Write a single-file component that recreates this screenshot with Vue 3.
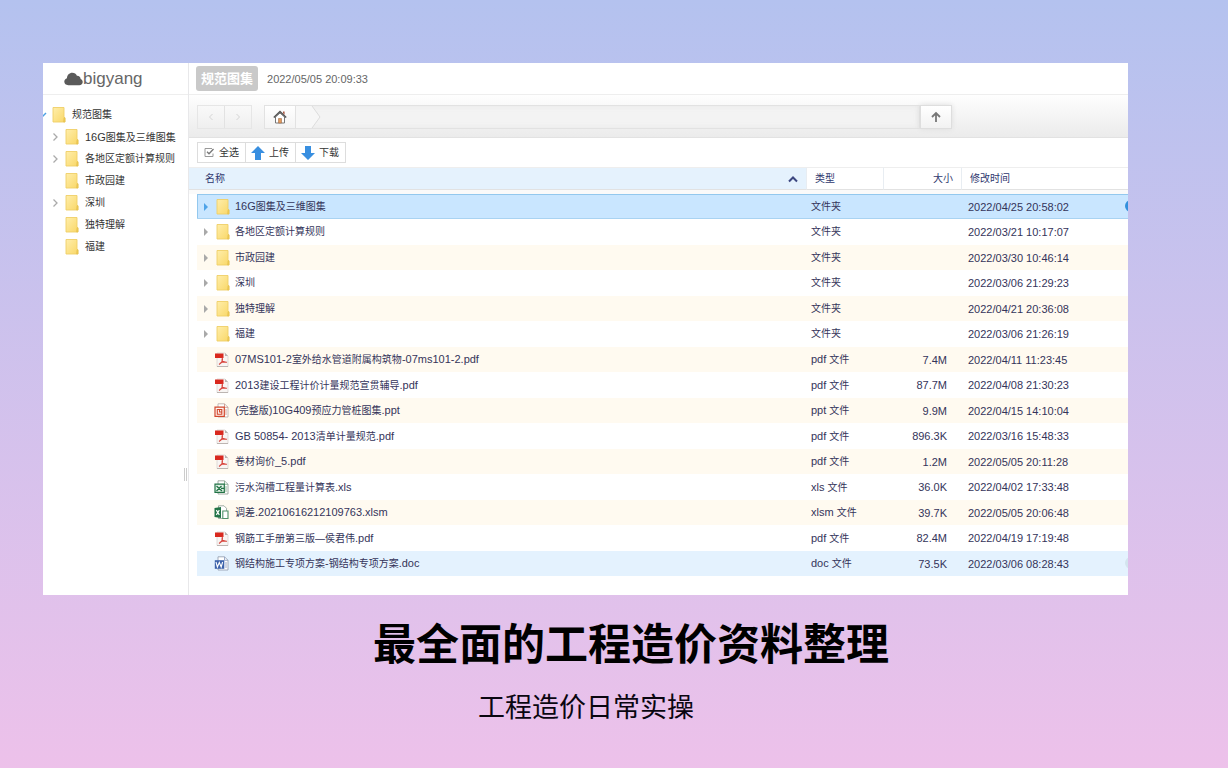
<script setup>
import { ref } from 'vue'

const tree = [
  { name: '16G图集及三维图集', expandable: true },
  { name: '各地区定额计算规则', expandable: true },
  { name: '市政园建', expandable: false },
  { name: '深圳', expandable: true },
  { name: '独特理解', expandable: false },
  { name: '福建', expandable: false },
]

const rows = [
  { name: '16G图集及三维图集', kind: 'folder', type: '文件夹', size: '', time: '2022/04/25 20:58:02' },
  { name: '各地区定额计算规则', kind: 'folder', type: '文件夹', size: '', time: '2022/03/21 10:17:07' },
  { name: '市政园建', kind: 'folder', type: '文件夹', size: '', time: '2022/03/30 10:46:14' },
  { name: '深圳', kind: 'folder', type: '文件夹', size: '', time: '2022/03/06 21:29:23' },
  { name: '独特理解', kind: 'folder', type: '文件夹', size: '', time: '2022/04/21 20:36:08' },
  { name: '福建', kind: 'folder', type: '文件夹', size: '', time: '2022/03/06 21:26:19' },
  { name: '07MS101-2室外给水管道附属构筑物-07ms101-2.pdf', kind: 'pdf', type: 'pdf 文件', size: '7.4M', time: '2022/04/11 11:23:45' },
  { name: '2013建设工程计价计量规范宣贯辅导.pdf', kind: 'pdf', type: 'pdf 文件', size: '87.7M', time: '2022/04/08 21:30:23' },
  { name: '(完整版)10G409预应力管桩图集.ppt', kind: 'ppt', type: 'ppt 文件', size: '9.9M', time: '2022/04/15 14:10:04' },
  { name: 'GB 50854- 2013清单计量规范.pdf', kind: 'pdf', type: 'pdf 文件', size: '896.3K', time: '2022/03/16 15:48:33' },
  { name: '卷材询价_5.pdf', kind: 'pdf', type: 'pdf 文件', size: '1.2M', time: '2022/05/05 20:11:28' },
  { name: '污水沟槽工程量计算表.xls', kind: 'xls', type: 'xls 文件', size: '36.0K', time: '2022/04/02 17:33:48' },
  { name: '调差.20210616212109763.xlsm', kind: 'xlsm', type: 'xlsm 文件', size: '39.7K', time: '2022/05/05 20:06:48' },
  { name: '钢筋工手册第三版—侯君伟.pdf', kind: 'pdf', type: 'pdf 文件', size: '82.4M', time: '2022/04/19 17:19:48' },
  { name: '钢结构施工专项方案-钢结构专项方案.doc', kind: 'doc', type: 'doc 文件', size: '73.5K', time: '2022/03/06 08:28:43' },
]

const selected = ref(0)
const hovered = ref(14)

// Latin runs are set one size larger than the Chinese ones.
const split = (text) =>
  text.match(/[\x20-\x7e]+|[^\x20-\x7e]+/g).map((run) => ({ run, latin: /^[\x20-\x7e]/.test(run) }))
</script>

<template>
  <main class="page">
    <svg class="defs" width="0" height="0" aria-hidden="true">
      <defs>
        <linearGradient id="folderFill" x1="0" y1="0" x2="1" y2="1">
          <stop offset="0" stop-color="#ffeeab" />
          <stop offset="1" stop-color="#f9d767" />
        </linearGradient>
        <symbol id="folder" viewBox="0 0 14 16">
          <path d="M1 .5h11v9l1 1.500v4H1z" fill="url(#folderFill)" stroke="#efcf68" stroke-width=".9" />
          <path d="M11.500 15l.5-4.500 1 .5v4z" fill="#f0ca50" stroke="#e3bf50" stroke-width=".5" />
        </symbol>
        <symbol id="pdf" viewBox="0 0 15 15">
          <path d="M3 1h8l3 3v10.500H3z" fill="#f8f5f3" stroke="#d4cecb" stroke-width=".7" />
          <path d="M11 1v3h3z" fill="#b9b2b0" />
          <path d="M1 1.500h8.500V6H1z" fill="#d9281e" />
          <path d="M8 5.500c1.200 2.300-.3 5.200-3 7M7.500 7.500c1 2 3.300 2.900 5.500 2.700M6 11c2-.9 4.500-1.300 7-.7" fill="none" stroke="#d8443d" stroke-width="1.100" />
          <path d="M3 14.500h11" stroke="#bcb5b2" />
        </symbol>
        <symbol id="ppt" viewBox="0 0 15 15">
          <path d="M4 .8h6.500l3.500 3.500v9.700H4z" fill="#fff" stroke="#b5aaa6" stroke-width=".8" />
          <path d="M10.500.8v3.500H14M11 7h2M11 9h2M11 11h2" fill="none" stroke="#cf8d7f" stroke-width=".8" />
          <path d="M1 4.200h9.300v9.100H1z" fill="#fff5f1" stroke="#d2472d" stroke-width="1.200" />
          <path d="M3.300 6.500h4.500v4.800H3.300zM5.500 6.500v2.500h2.300" fill="none" stroke="#d2472d" stroke-width="1.100" />
        </symbol>
        <symbol id="xls" viewBox="0 0 15 15">
          <path d="M4 .8h6.500l3.500 3.500v9.700H4z" fill="#fff" stroke="#8c9b91" stroke-width=".8" />
          <path d="M10.500.8v3.500H14M11 7h2M11 9h2M11 11h2" fill="none" stroke="#78a887" stroke-width=".8" />
          <path d="M1 4.200h9.300v8.100H1z" fill="#e5f3e9" stroke="#217346" stroke-width="1.200" />
          <path d="M2.500 6l5.500 5M7.500 6l-5 5M7 8.300h3" stroke="#217346" stroke-width="1.300" />
        </symbol>
        <symbol id="xlsm" viewBox="0 0 15 15">
          <path d="M4.500.8H10l2.500 2.500v10.200h-8z" fill="#fff" stroke="#8c9b91" stroke-width=".8" />
          <path d="M.5 3l6.500-1v11l-6.500-1z" fill="#217346" />
          <path d="M2.300 5.200l3 4.600M5.300 5.200l-3 4.600" stroke="#fff" stroke-width="1.200" />
          <path d="M8.800 6h5.200v7.500H8.800z" fill="#fff" stroke="#4f9269" stroke-width="1.100" />
        </symbol>
        <symbol id="doc" viewBox="0 0 15 15">
          <path d="M4 .8h6.500l3.500 3.500v9.700H4z" fill="#fff" stroke="#8e98aa" stroke-width=".8" />
          <path d="M10.500.8v3.500H14M11 7h2M11 9h2M11 11h2" fill="none" stroke="#8498bd" stroke-width=".8" />
          <path d="M.8 4.200h9.500v8.600H.8z" fill="#3c62aa" />
          <path d="M2 6l1.400 5 1.900-4.500 1.900 4.500L8.600 6" fill="none" stroke="#fff" stroke-width="1.100" />
        </symbol>
      </defs>
    </svg>

    <section class="panel">
      <aside class="side">
        <div class="brand">
          <svg class="cloud" viewBox="0 0 20 14" aria-hidden="true">
            <path d="M4.500 13.500C2 13.500.3 12 .3 9.700c0-1.900 1.300-3.200 2.800-3.600C3.300 2.900 5.600.5 8.700.5c2.400 0 4.100 1.200 4.900 3.100 2.400-.1 3.900 1.400 3.900 3.500 1.400.6 2.200 1.700 2.200 3.100 0 2-1.500 3.300-3.600 3.300z" fill="#5a5a5a" />
          </svg>
          <span>bigyang</span>
        </div>
        <nav class="tree" aria-label="目录">
          <button class="node root" type="button">
            <svg class="twist" viewBox="0 0 8 10" aria-hidden="true"><path d="M-1 7l4-4" stroke="#4ba0e4" stroke-width="1.500" /></svg>
            <svg class="folder" aria-hidden="true"><use href="#folder" /></svg>
            <span>规范图集</span>
          </button>
          <button v-for="n in tree" :key="n.name" class="node" type="button">
            <svg class="twist" viewBox="0 0 8 10" aria-hidden="true">
              <path v-if="n.expandable" d="M2.500 1.500L6 5 2.500 8.500" fill="none" stroke="#aaa" stroke-width="1.300" />
            </svg>
            <svg class="folder" aria-hidden="true"><use href="#folder" /></svg>
            <span><span v-for="(s, i) in split(n.name)" :key="i" :class="{ latin: s.latin }">{{ s.run }}</span></span>
          </button>
        </nav>
        <span class="grip"></span>
      </aside>

      <div class="content">
        <header class="titlebar">
          <span class="tag">规范图集</span>
          <time class="clock">2022/05/05 20:09:33</time>
        </header>

        <div class="navbar">
          <div class="history">
            <button type="button" aria-label="后退"><svg viewBox="0 0 10 10"><path d="M6.500 2L3.500 5l3 3" /></svg></button>
            <button type="button" aria-label="前进"><svg viewBox="0 0 10 10"><path d="M3.500 2l3 3-3 3" /></svg></button>
          </div>
          <div class="path">
            <button class="home" type="button" aria-label="主页">
              <svg viewBox="0 0 14 14">
                <path d="M2.500 7v6h9V7L7 3z" fill="#fff" stroke="#777" />
                <path d="M.8 7.500L7 1.500l6.200 6" fill="none" stroke="#555" stroke-width="1.500" />
                <path d="M10 1.500h1.600v3.300L10 3.300z" fill="#aa5b46" />
                <path d="M5.500 8.500h3V13h-3z" fill="#e39a5c" stroke="#a16b48" stroke-width=".6" />
              </svg>
            </button>
            <svg class="crumb" viewBox="0 0 26 22" aria-hidden="true"><path d="M0 0h16l8 11-8 11H0z" fill="#f7f7f7" /><path d="M16 0l8 11-8 11" fill="none" stroke="#dcdcdc" /></svg>
          </div>
          <button class="up" type="button" aria-label="上一级">
            <svg viewBox="0 0 12 12"><path d="M6 11V2M2 6l4-4 4 4" fill="none" stroke="#777" stroke-width="1.800" /></svg>
          </button>
        </div>

        <div class="tools">
          <button type="button">
            <svg class="check" viewBox="0 0 12 12" aria-hidden="true"><path d="M9 1.500H2v8h8V6.500" fill="none" stroke="#999" /><path d="M4 4.800l2 2L10.500 2" fill="none" stroke="#777" stroke-width="1.300" /></svg>
            <span>全选</span>
          </button>
          <button type="button">
            <svg class="arrow" viewBox="0 0 14 14" aria-hidden="true"><path d="M7 0l7 7h-4v7H4V7H0z" fill="#398fe0" /></svg>
            <span>上传</span>
          </button>
          <button type="button">
            <svg class="arrow" viewBox="0 0 14 14" aria-hidden="true"><path d="M7 14l7-7h-4V0H4v7H0z" fill="#398fe0" /></svg>
            <span>下载</span>
          </button>
        </div>

        <table class="files">
          <colgroup>
            <col />
            <col class="c-type" />
            <col class="c-size" />
            <col class="c-time" />
          </colgroup>
          <thead>
            <tr>
              <th class="sorted" scope="col">
                <div class="sorthead">
                  <span>名称</span>
                  <svg viewBox="0 0 10 8" aria-hidden="true"><path d="M1 6.500l4-4 4 4" fill="none" stroke="#3c4780" stroke-width="2" /></svg>
                </div>
              </th>
              <th scope="col">类型</th>
              <th class="num" scope="col">大小</th>
              <th scope="col">修改时间</th>
            </tr>
          </thead>
          <tbody>
            <tr class="gap" aria-hidden="true"><td colspan="4"></td></tr>
            <tr
              v-for="(r, i) in rows"
              :key="r.name"
              :class="{ odd: i % 2 === 0, selected: i === selected, hovered: i === hovered }"
              @click="selected = i"
            >
              <td class="first">
                <div class="name">
                  <svg class="tri" viewBox="0 0 6 8" aria-hidden="true">
                    <path v-if="r.kind === 'folder'" d="M1 0l4 4-4 4z" :fill="i === selected ? '#4ea3e8' : '#a9a9a9'" />
                  </svg>
                  <svg :class="r.kind === 'folder' ? 'folder' : 'file'" aria-hidden="true"><use :href="'#' + r.kind" /></svg>
                  <span><span v-for="(s, k) in split(r.name)" :key="k" :class="{ latin: s.latin }">{{ s.run }}</span></span>
                </div>
              </td>
              <td><span v-for="(s, k) in split(r.type)" :key="k" :class="{ latin: s.latin }">{{ s.run }}</span></td>
              <td class="num latin">{{ r.size }}</td>
              <td class="time latin">{{ r.time }}<span v-if="i === selected || i === hovered" class="dot"></span></td>
            </tr>
          </tbody>
        </table>
      </div>
    </section>

    <h1>最全面的工程造价资料整理</h1>
    <p class="sub">工程造价日常实操</p>
  </main>
</template>

<style>
body {
  margin: 0;
}
</style>

<style scoped>
.page {
  box-sizing: border-box;
  min-height: 100vh;
  padding: 63px 100px 0 43px;
  background: linear-gradient(#b4c2ef, #edc1ea);
  font-family: "Liberation Sans", "Noto Sans CJK SC", sans-serif;
  overflow: hidden;
}
.defs {
  position: absolute;
}
button {
  font: inherit;
  color: inherit;
  margin: 0;
  padding: 0;
  border: 0;
  background: none;
  cursor: pointer;
}
svg {
  flex: none;
  display: block;
}
.latin {
  font-size: 11px;
}
.panel {
  display: flex;
  min-height: 532px;
  background: #fff;
  overflow: hidden;
  font-size: 10px;
  line-height: 16px;
  color: #333;
}
.side {
  position: relative;
  flex: none;
  width: 145px;
  border-right: 1px solid #e8e8ea;
}
.brand {
  display: flex;
  align-items: center;
  height: 31px;
  padding-left: 21px;
  border-bottom: 1px solid #eee;
  font-size: 17px;
  color: #666;
}
.cloud {
  width: 19px;
  height: 14px;
}
.tree {
  display: flex;
  flex-direction: column;
  padding-top: 9px;
}
.node {
  display: flex;
  align-items: center;
  height: 22px;
  padding-left: 8px;
  white-space: nowrap;
}
.root {
  padding-left: 0;
}
.twist {
  width: 8px;
  height: 10px;
  margin-right: 6px;
}
.root .twist {
  margin-right: 1px;
}
.folder {
  width: 14px;
  height: 16px;
}
.node .folder {
  margin-right: 6px;
}
.grip {
  position: absolute;
  right: 1px;
  top: 405px;
  width: 1px;
  height: 13px;
  border: solid #ccc;
  border-width: 0 1px;
}
.content {
  flex: 1;
  min-width: 0;
}
.titlebar {
  display: flex;
  align-items: center;
  gap: 9px;
  height: 31px;
  padding-left: 7px;
  border-bottom: 1px solid #eee;
}
.tag {
  padding: 0 5px;
  border-radius: 3px;
  background: #c9c9c9;
  color: #fff;
  font-size: 13px;
  font-weight: 700;
  line-height: 25px;
}
.clock {
  font-size: 11px;
  color: #666;
}
.navbar {
  display: flex;
  align-items: center;
  box-sizing: border-box;
  height: 43px;
  padding: 2px 176px 0 8px;
  background: linear-gradient(#fefefe, #ebebeb);
  border-bottom: 1px solid #e2e2e2;
}
.history {
  display: flex;
  margin-right: 12px;
  border: 1px solid #e6e6e6;
}
.history button {
  display: grid;
  place-items: center;
  width: 26px;
  height: 22px;
}
.history button + button {
  width: 27px;
  border-left: 1px solid #e2e2e2;
}
.history svg {
  width: 10px;
  height: 10px;
  fill: none;
  stroke: #d5d5d5;
}
.path {
  flex: 1;
  display: flex;
  box-sizing: border-box;
  height: 24px;
  border: 1px solid #e2e2e2;
  background: #f3f3f3;
  box-shadow: inset 0 0 6px #e8e8e8;
}
.home {
  display: grid;
  place-items: center;
  width: 31px;
  background: linear-gradient(#fff, #f4f4f4);
  border-right: 1px solid #e2e2e2;
}
.home svg {
  width: 14px;
  height: 14px;
}
.crumb {
  width: 26px;
  height: 22px;
}
.up {
  display: grid;
  place-items: center;
  box-sizing: border-box;
  width: 32px;
  height: 24px;
  border: 1px solid #dedede;
  background: linear-gradient(#fff, #f2f2f2);
  box-shadow: 0 0 5px #ddd;
}
.up svg {
  width: 12px;
  height: 12px;
}
.tools {
  display: flex;
  padding: 4px 8px;
}
.tools button {
  display: flex;
  align-items: center;
  gap: 4px;
  height: 21px;
  box-sizing: border-box;
  padding: 0 6px 0 5px;
  border: 1px solid #ddd;
  border-right-width: 0;
}
.tools button:last-child {
  border-right-width: 1px;
}
.check {
  width: 12px;
  height: 12px;
}
.arrow {
  width: 14px;
  height: 14px;
}
.files {
  width: 100%;
  table-layout: fixed;
  border-collapse: separate;
  border-spacing: 0;
  color: #34345a;
}
.c-type {
  width: 77px;
}
.c-size {
  width: 78px;
}
.c-time {
  width: 167px;
}
th {
  height: 23px;
  box-sizing: border-box;
  padding: 0 8px;
  border-top: 1px solid #eee;
  border-bottom: 1px solid #e2e2e2;
  border-left: 1px solid #e8edf2;
  font-weight: 400;
  text-align: left;
  color: #30386f;
}
th.sorted {
  padding-left: 16px;
  border-left: 0;
  background: #e5f2fd;
}
.sorthead {
  display: flex;
  align-items: center;
  justify-content: space-between;
}
.sorthead svg {
  width: 10px;
  height: 8px;
}
td {
  height: 26px;
  box-sizing: border-box;
  padding: 0 5px;
  white-space: nowrap;
}
.gap td {
  height: 4px;
  padding: 0;
  background: #fafafa;
}
.odd td {
  height: 25px;
  background: #fffaf0;
  background-clip: padding-box;
}
td.first {
  padding: 0 0 0 6px;
  border-left: 8px solid transparent;
}
.selected td {
  background: #c9e6ff;
  background-clip: padding-box;
  box-shadow: inset 0 1px #93c8ee, inset 0 -1px #a9d3f2;
}
.selected td.first {
  box-shadow: inset 0 1px #93c8ee, inset 0 -1px #a9d3f2, inset 1px 0 #93c8ee;
}
.hovered td {
  background: #e4f2fe;
  background-clip: padding-box;
}
th.num,
td.num {
  text-align: right;
}
td.num {
  padding-right: 14px;
}
td.time {
  position: relative;
  padding-left: 7px;
  overflow: hidden;
}
.name {
  display: flex;
  align-items: center;
}
.tri {
  width: 6px;
  height: 8px;
  margin-right: 7px;
}
.name .folder {
  margin-right: 5px;
}
.file {
  width: 15px;
  height: 15px;
  margin: 0 6px 0 -2px;
}
.dot {
  position: absolute;
  right: -9px;
  top: 6px;
  width: 12px;
  height: 12px;
  border-radius: 50%;
  background: #3390dc;
}
.hovered .dot {
  background: #d3e4ee;
}
h1 {
  margin: 18px 0 0;
  padding-left: 91px;
  font-size: 43px;
  line-height: 64px;
  font-weight: 700;
  text-align: center;
  color: #000;
}
.sub {
  margin: 11px 0 0;
  padding-left: 1px;
  font-size: 27px;
  line-height: 40px;
  text-align: center;
  color: #0a0610;
}
</style>
